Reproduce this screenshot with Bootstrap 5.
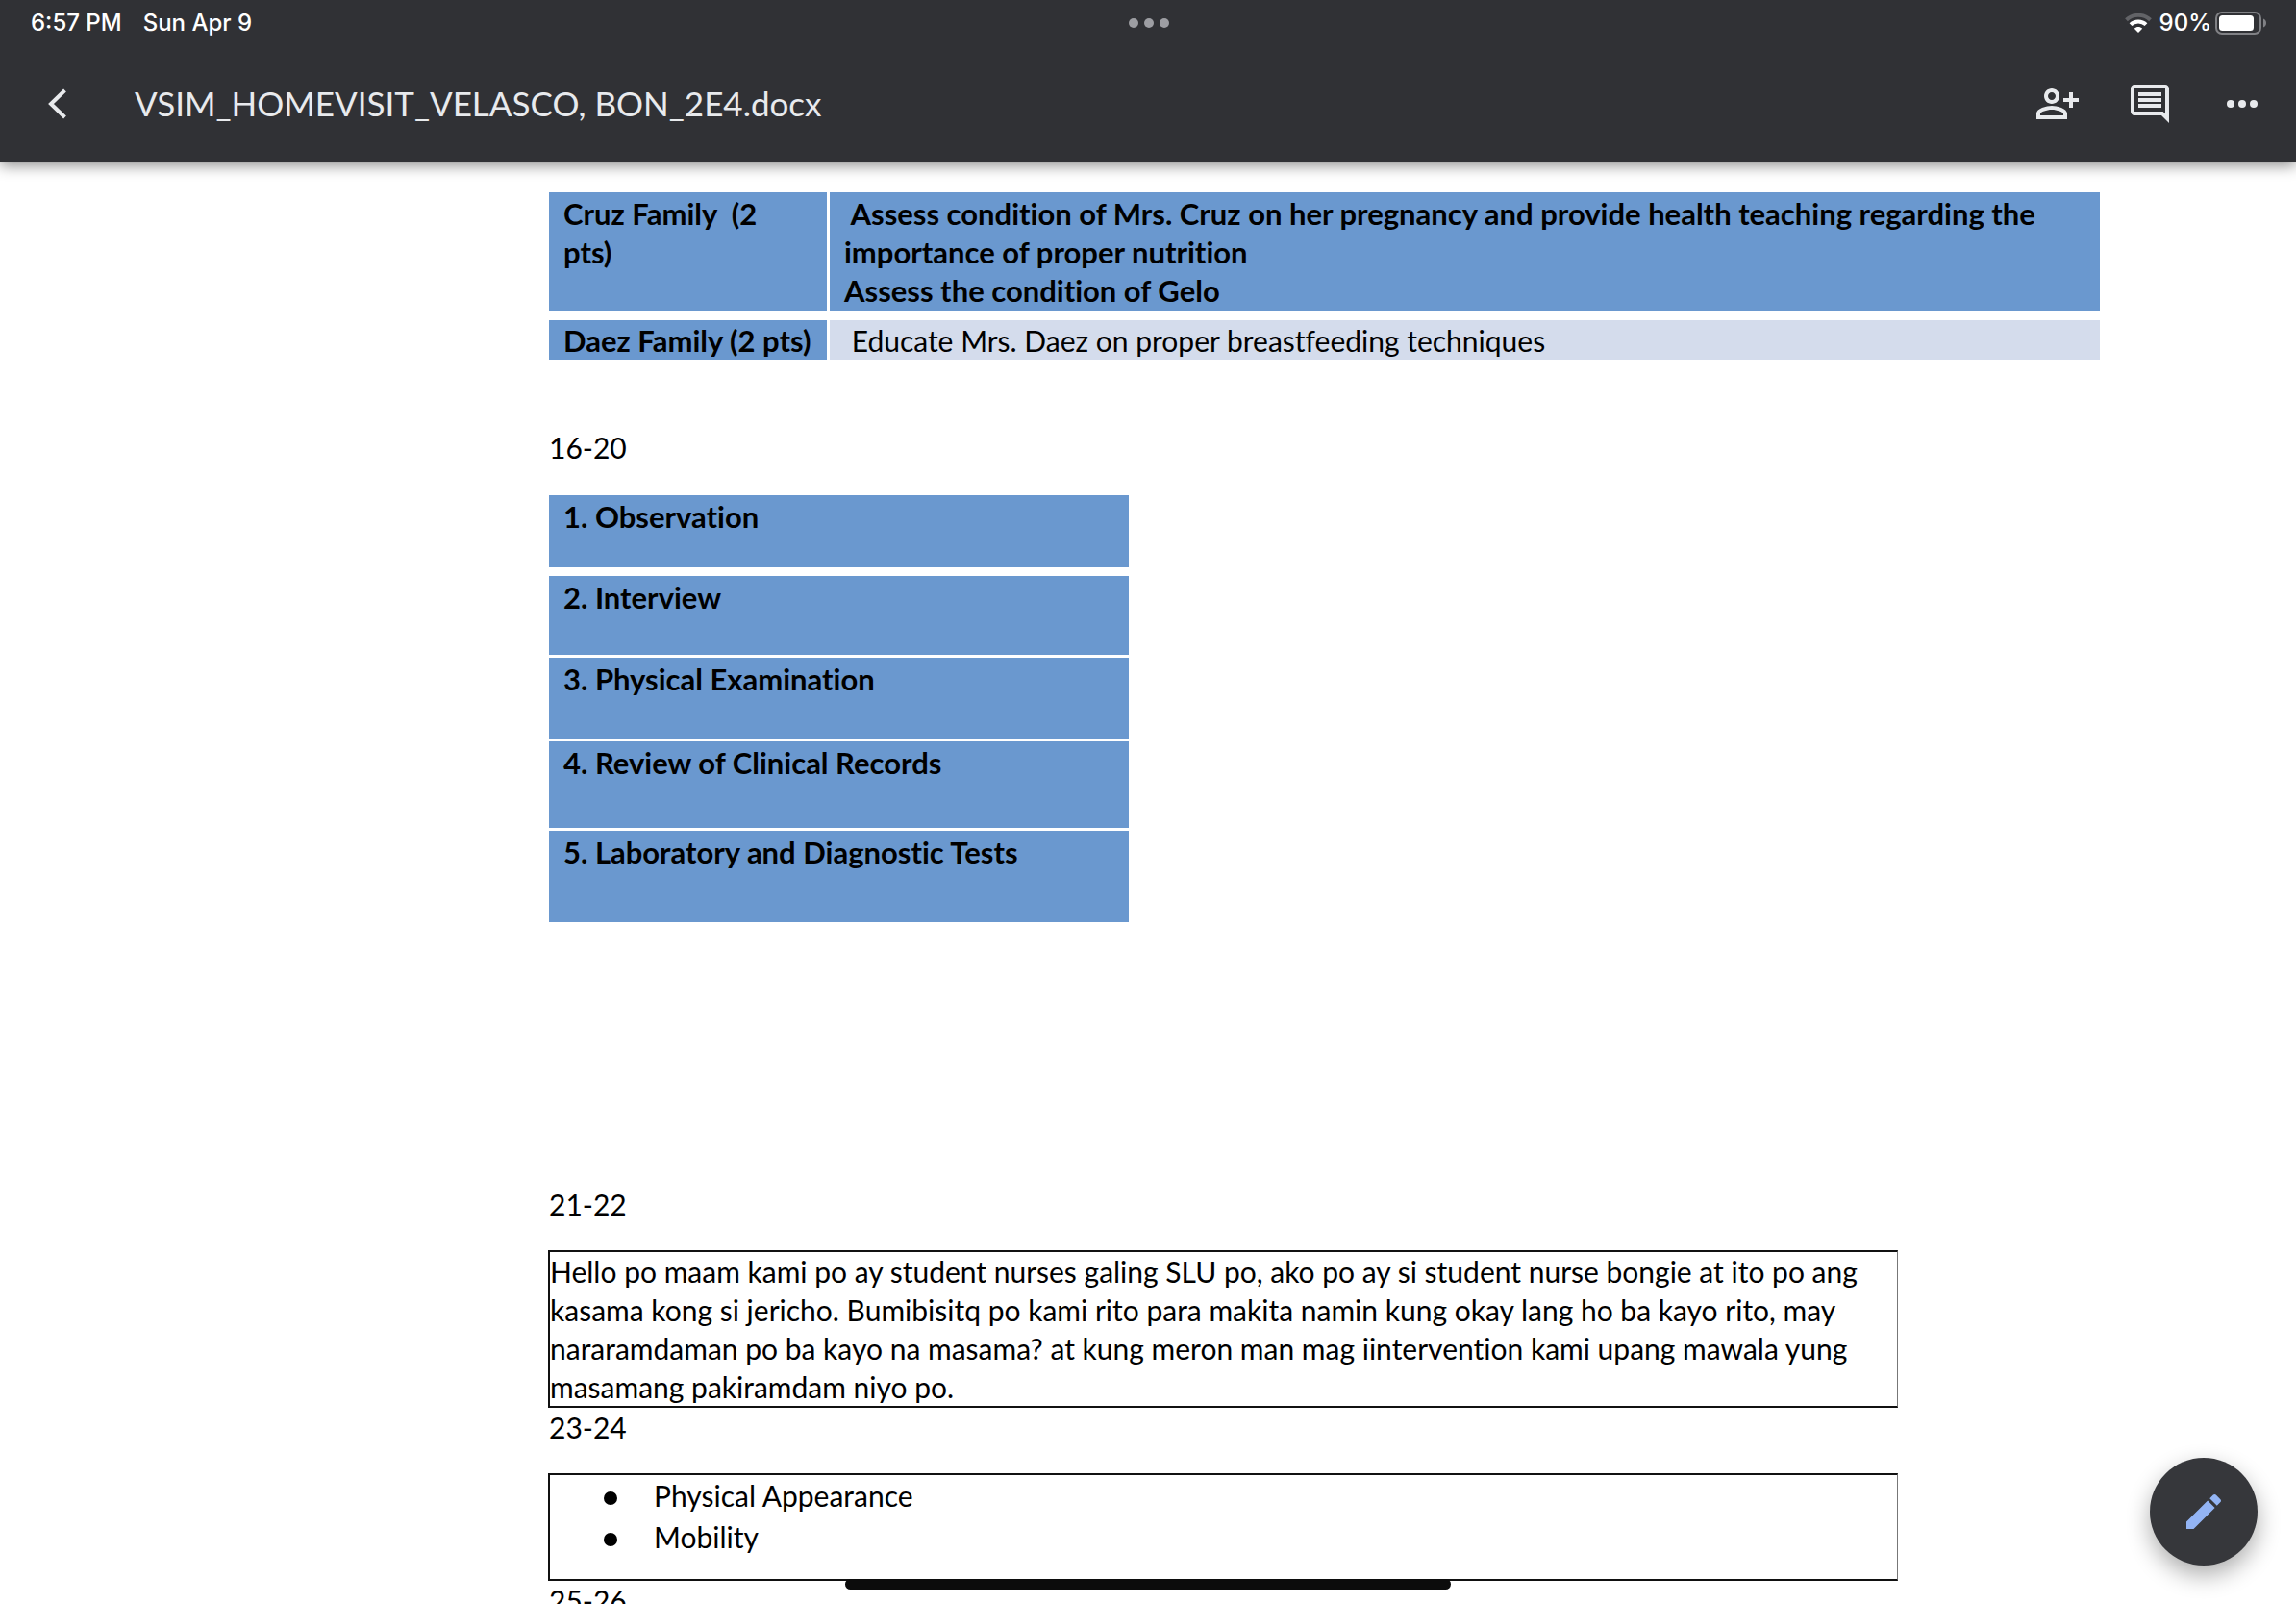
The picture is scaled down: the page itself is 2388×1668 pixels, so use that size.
<!DOCTYPE html>
<html lang="en">
<head>
<meta charset="utf-8">
<meta name="viewport" content="width=device-width, initial-scale=1">
<title>VSIM_HOMEVISIT_VELASCO, BON_2E4.docx</title>
<link href="https://cdn.jsdelivr.net/npm/bootstrap@5.3.0/dist/css/bootstrap.min.css" rel="stylesheet">
<style>
  :root { --bar: #303135; --icon: #e8eaed; --cell: #6a98cf; --cell-light: #d4dcec; }
  .app-bar { background: var(--bar); box-shadow: 0 4px 14px rgba(0,0,0,.45); z-index: 2; }
  .status { height: 48px; padding: 0 30px 0 32px; color: #fff; font: 500 24px/48px Inter, sans-serif; }
  .status-side { flex: 1 1 0; }
  .clock { gap: 22px; }
  .tools { height: 120px; padding: 0 32px 0 36px; gap: 48px; }
  .icon-btn { width: 48px; height: 48px; padding: 0; border: 0; background: none; color: var(--icon); }
  .icon-btn svg, .fab svg { display: block; width: 48px; height: 48px; }
  .doc-title { margin: 0 0 0 8px; padding-bottom: 2px; color: var(--icon); font: 400 35px/46px Lato, sans-serif; }
  .doc { padding: 32px 0 0 571px; color: #000; font: 400 30px/40px Lato, sans-serif; font-variant-ligatures: none; }
  .doc p { margin: 0; white-space: nowrap; }
  .doc th, .doc td { padding: 2px 15px 0; vertical-align: top; text-align: left; white-space: nowrap; }
  .doc th, .doc .strong-cell { background: var(--cell); font-size: 31px; font-weight: 700; }
  .families { width: 1613px; border-collapse: separate; border-spacing: 0; }
  .families th { width: 292px; border-right: 3px solid #fff; }
  .families .row-tall > * { height: 123px; }
  .families .row-short > * { height: 51px; padding-top: 1px; border-top: 10px solid #fff; }
  .doc .light-cell { background: var(--cell-light); }
  .methods { width: 603px; margin-top: 30px; border-collapse: separate; border-spacing: 0; }
  .methods th { border-bottom: 3px solid #fff; }
  .methods .wide-gap th { border-bottom-width: 9px; }
  .doc .after-families { margin-top: 71px; }
  .doc .after-methods { margin-top: 270px; }
  .doc .boxed { width: 1404px; margin: 28px 0 0 -1px; border: 2px solid #111; border-right: 1px solid #777; }
  .traits { padding: 0 0 22px 108px; list-style: none; line-height: 43px; }
  .traits li::before { content: ""; display: inline-block; width: 14px; height: 14px; margin: 0 38px 3px -52px; border-radius: 50%; background: #000; vertical-align: middle; }
  .fab { right: 40px; bottom: 40px; width: 112px; height: 112px; padding: 32px; border: 0; border-radius: 50%; background: #36373b; color: #93b4f4; box-shadow: 0 10px 24px rgba(0,0,0,.32); }
  .home-bar { left: 50%; bottom: 15px; width: 630px; height: 11px; border-radius: 6px; background: #0c0c0c; transform: translateX(-50%); }
</style>
<script src="https://cdn.jsdelivr.net/npm/bootstrap@5.3.0/dist/js/bootstrap.bundle.min.js"></script>
</head>
<body class="bg-white">
<div class="d-flex flex-column vh-100 overflow-hidden">
  <header class="app-bar position-relative flex-shrink-0">
    <div class="status d-flex align-items-center">
      <div class="status-side clock d-flex"><span>6:57 PM</span><span>Sun Apr 9</span></div>
      <svg width="42" height="10" viewBox="0 0 42 10" fill="#9d9ea3" aria-hidden="true"><circle cx="5" cy="5" r="5"/><circle cx="21" cy="5" r="5"/><circle cx="37" cy="5" r="5"/></svg>
      <div class="status-side d-flex align-items-center justify-content-end">
        <svg width="28" height="20" viewBox="0 0 28 20" fill="none" aria-hidden="true">
          <path d="M1.500 6.800C8.500.2 19.500.2 26.500 6.800" stroke="#626367" stroke-width="4"/>
          <path d="M6 11.600c4.500-4.200 11.500-4.200 16 0" stroke="#fff" stroke-width="4"/>
          <path d="M9.800 15.700c2.400-2.200 6-2.200 8.400 0L14 20z" fill="#fff"/>
        </svg>
        <span class="ms-2 me-1">90%</span>
        <svg width="54" height="24" viewBox="0 0 54 24" aria-hidden="true">
          <rect x="1" y="1" width="46" height="22" rx="6" fill="none" stroke="#808185" stroke-width="2"/>
          <rect x="4" y="4" width="36" height="16" rx="3.500" fill="#fff"/>
          <path d="M50 7.500c4 1.500 4 7.500 0 9z" fill="#808185"/>
        </svg>
      </div>
    </div>
    <nav class="tools d-flex align-items-center">
      <button class="icon-btn" type="button" aria-label="Back"><svg viewBox="0 0 48 48" fill="none" stroke="currentColor" stroke-width="4"><path d="M31.500 10 17 24l14.500 14"/></svg></button>
      <h1 class="doc-title flex-grow-1 text-nowrap">VSIM_HOMEVISIT_VELASCO, BON_2E4.docx</h1>
      <button class="icon-btn" type="button" aria-label="Share"><svg viewBox="0 0 24 24" fill="currentColor" fill-rule="evenodd"><path d="M20 9V6h-2v3h-3v2h3v3h2v-3h3V9zM9 12c2.210 0 4-1.790 4-4s-1.790-4-4-4-4 1.790-4 4 1.790 4 4 4zm0-6c1.100 0 2 .9 2 2s-.9 2-2 2-2-.9-2-2 .9-2 2-2zM9 13c-2.670 0-8 1.340-8 4v3h16v-3c0-2.660-5.330-4-8-4zm6 5H3v-.990C3.200 16.290 6.300 15 9 15s5.800 1.290 6 2z"/></svg></button>
      <button class="icon-btn" type="button" aria-label="Comments"><svg viewBox="0 0 24 24" fill="currentColor"><path d="M21.990 4c0-1.100-.890-2-1.990-2H4c-1.100 0-2 .9-2 2v12c0 1.100.9 2 2 2h14l4 4-.010-18zM20 4v13.170L18.830 16H4V4h16zM6 12h12v2H6zm0-3h12v2H6zm0-3h12v2H6z"/></svg></button>
      <button class="icon-btn" type="button" aria-label="More"><svg viewBox="0 0 24 24" fill="currentColor"><circle cx="6" cy="12" r="2"/><circle cx="12" cy="12" r="2"/><circle cx="18" cy="12" r="2"/></svg></button>
    </nav>
  </header>

  <main class="doc flex-grow-1 overflow-hidden">
    <table class="families">
      <tr class="row-tall">
        <th scope="row">Cruz Family&nbsp; (2<br>pts)</th>
        <td class="strong-cell">&nbsp;Assess condition of Mrs. Cruz on her pregnancy and provide health teaching regarding the<br>importance of proper nutrition<br>Assess the condition of Gelo</td>
      </tr>
      <tr class="row-short">
        <th scope="row">Daez Family (2 pts)</th>
        <td class="light-cell">&nbsp;Educate Mrs. Daez on proper breastfeeding techniques</td>
      </tr>
    </table>
    <p class="after-families">16-20</p>
    <table class="methods">
      <tr class="wide-gap" style="height:84px"><th scope="row">1. Observation</th></tr>
      <tr style="height:85px"><th scope="row">2. Interview</th></tr>
      <tr style="height:87px"><th scope="row">3. Physical Examination</th></tr>
      <tr style="height:93px"><th scope="row">4. Review of Clinical Records</th></tr>
      <tr style="height:98px"><th scope="row">5. Laboratory and Diagnostic Tests</th></tr>
    </table>
    <p class="after-methods">21-22</p>
    <p class="boxed">Hello po maam kami po ay student nurses galing SLU po, ako po ay si student nurse bongie at ito po ang<br>kasama kong si jericho. Bumibisitq po kami rito para makita namin kung okay lang ho ba kayo rito, may<br>nararamdaman po ba kayo na masama? at kung meron man mag iintervention kami upang mawala yung<br>masamang pakiramdam niyo po.</p>
    <p>23-24</p>
    <ul class="boxed traits">
      <li>Physical Appearance</li>
      <li>Mobility</li>
    </ul>
    <p>25-26</p>
  </main>
</div>
<button class="fab position-fixed" type="button" aria-label="Edit"><svg viewBox="0 0 24 24" fill="currentColor"><path d="M3 17.250V21h3.750L17.810 9.940l-3.750-3.750zM20.710 7.040c.390-.390.390-1.020 0-1.410l-2.340-2.340c-.390-.390-1.020-.390-1.410 0l-1.830 1.830 3.750 3.750z"/></svg></button>
<div class="home-bar position-fixed"></div>
</body>
</html>
